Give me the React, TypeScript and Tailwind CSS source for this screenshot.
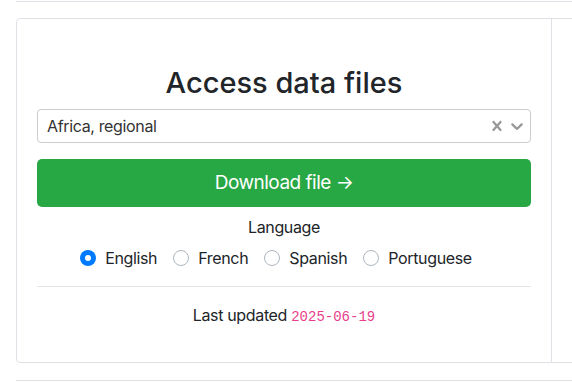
import React from "react";

function Radio({ checked, label }: { checked?: boolean; label: string }) {
  return (
    <label className="flex items-center mr-[16px]">
      {checked ? (
        <span className="w-[16px] h-[16px] rounded-full bg-[#007bff] flex items-center justify-center">
          <span className="w-[6px] h-[6px] rounded-full bg-white" />
        </span>
      ) : (
        <span className="w-[16px] h-[16px] rounded-full border border-[#adb5bd] bg-white" />
      )}
      <span className="ml-[9px]">{label}</span>
    </label>
  );
}

export default function App() {
  return (
    <div
      className="w-[572px] h-[382px] overflow-hidden bg-white text-[#212529]"
      style={{ fontFamily: "Inter, 'Noto Sans', sans-serif" }}
    >
      <div className="pl-[16px]">
        <div className="mt-px h-px bg-[#dee2e6]" />
        <div className="mt-[16px] h-[345px] w-[700px] border border-[#dee2e6] rounded-[4px] flex">
          <div className="w-[535px] h-full border-r border-[#dee2e6] px-[20px] pt-[44px] flex flex-col">
            <h2 className="h-[40px] leading-[40px] text-center text-[29px] font-medium">
              Access data files
            </h2>
            <div className="mt-[6px] h-[34px] border border-[#cccccc] rounded-[4px] flex items-center pl-[9px] pr-[3px]">
              <span className="flex-1 text-[16px] tracking-[-0.35px] text-[#333333]">Africa, regional</span>
              <svg width="20" height="20" viewBox="0 0 20 20" fill="#999999">
                <path d="M14.348 14.849c-0.469 0.469-1.229 0.469-1.697 0l-2.651-3.030-2.651 3.029c-0.469 0.469-1.229 0.469-1.697 0-0.469-0.469-0.469-1.229 0-1.697l2.758-3.15-2.759-3.152c-0.469-0.469-0.469-1.228 0-1.697s1.228-0.469 1.697 0l2.652 3.031 2.651-3.031c0.469-0.469 1.228-0.469 1.697 0s0.469 1.229 0 1.697l-2.758 3.152 2.758 3.150c0.469 0.469 0.469 1.229 0 1.698z" />
              </svg>
              <svg width="20" height="20" viewBox="0 0 20 20" fill="#999999">
                <path d="M4.516 7.548c0.436-0.446 1.043-0.481 1.576 0l3.908 3.747 3.908-3.747c0.533-0.481 1.141-0.446 1.574 0 0.436 0.445 0.408 1.197 0 1.615-0.406 0.418-4.695 4.502-4.695 4.502-0.217 0.223-0.502 0.335-0.787 0.335s-0.57-0.112-0.789-0.335c0 0-4.287-4.084-4.695-4.502s-0.436-1.17 0-1.615z" />
              </svg>
            </div>
            <button className="mt-[16px] h-[48px] rounded-[5px] bg-[#28a745] text-white text-[19px] tracking-[-0.5px] flex items-center justify-center">
              Download file →
            </button>
            <div className="mt-[8px] h-[24px] leading-[24px] text-center text-[16px] tracking-[-0.35px]">Language</div>
            <div className="mt-[7px] h-[24px] flex items-center justify-center text-[16px] tracking-[-0.35px]">
              <Radio checked label="English" />
              <Radio label="French" />
              <Radio label="Spanish" />
              <Radio label="Portuguese" />
            </div>
            <div className="mt-[16px] h-px bg-[#e5e5e5]" />
            <div className="mt-[16px] h-[24px] leading-[24px] text-center text-[16px] tracking-[-0.35px]">
              Last updated{" "}
              <code
                className="text-[14px] tracking-normal text-[#e83e8c]"
                style={{ fontFamily: "'Liberation Mono', monospace" }}
              >
                2025-06-19
              </code>
            </div>
          </div>
        </div>
        <div className="mt-[17px] h-px bg-[#dee2e6]" />
      </div>
    </div>
  );
}
